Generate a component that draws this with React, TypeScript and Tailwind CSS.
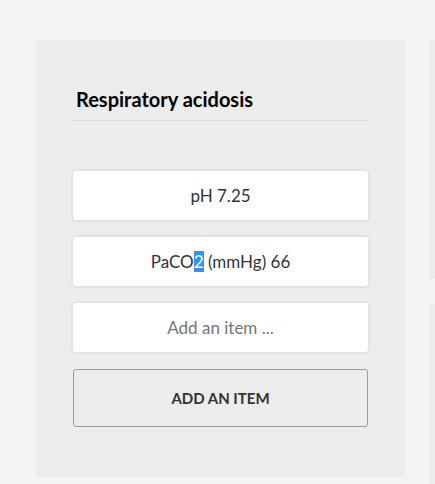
const items = ['pH 7.25']

function Item({ children }: { children: React.ReactNode }) {
  return (
    <div className="-mx-[2px] flex h-[53px] items-center justify-center rounded-[5px] border-2 border-[#e3e3e3] bg-white text-[17px] text-[#333]">
      {children}
    </div>
  )
}

export default function App() {
  return (
    <div className="flex h-[484px] w-[435px] items-start gap-[25px] overflow-hidden bg-[#f4f4f4] pl-[36px] pt-[40px] font-['Lato',sans-serif]">
      {/* main list card */}
      <div className="h-[437px] w-[369px] shrink-0 bg-[#ececec] px-[37px] pt-[45px]">
        <h2 className="border-b border-[#d9d9d9] pb-[7px] pl-[3px] text-[20px] leading-[28px] font-bold text-black">
          Respiratory acidosis
        </h2>

        <div className="mt-[48px] flex flex-col gap-[13px]">
          {items.map((t) => (
            <Item key={t}>{t}</Item>
          ))}
          <Item>
            <span>
              PaCO<span className="bg-[#3390ff] text-white">2</span> (mmHg) 66
            </span>
          </Item>
          <div className="-mx-[2px] flex h-[53px] items-center rounded-[5px] border-2 border-[#e3e3e3] bg-white">
            <input
              className="w-full bg-transparent text-center text-[17px] text-[#333] outline-none placeholder:text-[#767676]"
              placeholder="Add an item ..."
            />
          </div>
        </div>

        <button className="mt-[15px] flex h-[58px] w-full items-center justify-center rounded-[3px] border border-[#9c9c9c] bg-transparent text-[15px] font-bold uppercase text-[#333]">
          Add an item
        </button>
      </div>

      {/* next column, cut off at the window edge */}
      <div className="flex w-[200px] shrink-0 flex-col gap-[25px]">
        <div className="h-[239px] bg-[#ececec]" />
        <div className="h-[300px] bg-[#ececec]" />
      </div>
    </div>
  )
}
